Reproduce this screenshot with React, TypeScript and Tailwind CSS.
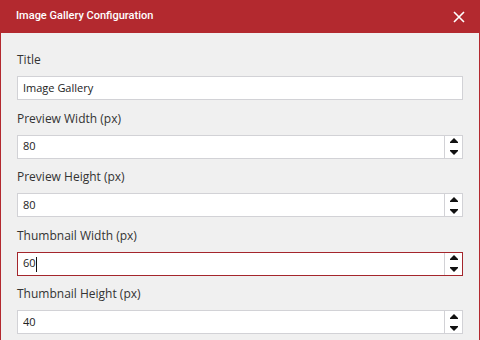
import { useState } from 'react';

type Field = {
  label: string;
  value: string;
  numeric?: boolean;
  focused?: boolean;
};

const fields: Field[] = [
  { label: 'Title', value: 'Image Gallery' },
  { label: 'Preview Width (px)', value: '80', numeric: true },
  { label: 'Preview Height (px)', value: '80', numeric: true },
  { label: 'Thumbnail Width (px)', value: '60', numeric: true, focused: true },
  { label: 'Thumbnail Height (px)', value: '40', numeric: true },
];

function Spinner() {
  return (
    <div className="flex w-[18px] flex-col items-center justify-center gap-[7px] border-l border-[#d2d2d6]">
      <svg width="8" height="5" viewBox="0 0 8 5" className="block">
        <path d="M4 0 L8 4 L8 5 L0 5 L0 4 Z" fill="#111" />
      </svg>
      <svg width="8" height="5" viewBox="0 0 8 5" className="block">
        <path d="M0 0 L8 0 L8 1 L4 5 L0 1 Z" fill="#111" />
      </svg>
    </div>
  );
}

function FieldRow({ field }: { field: Field }) {
  const [value, setValue] = useState(field.value);
  return (
    <div className="flex flex-col">
      <label className="mb-[8px] h-[17px] text-[12px] leading-[17px] text-[#333]">{field.label}</label>
      <div
        className={`flex h-[24px] bg-white border ${
          field.focused ? 'border-[#a4262c]' : 'border-[#d2d2d6]'
        }`}
      >
        <div className="relative flex flex-1 items-center px-[5px]">
          <input
            value={value}
            onChange={(e) => setValue(e.target.value)}
            className="w-full bg-transparent text-[11px] text-[#222] outline-none"
          />
          {field.focused && (
            <span className="pointer-events-none absolute left-[18px] top-[4px] h-[15px] w-px bg-[#111]" />
          )}
        </div>
        {field.numeric && <Spinner />}
      </div>
    </div>
  );
}

export default function App() {
  return (
    <div
      className="flex h-[340px] w-[480px] flex-col overflow-hidden border-x border-[#b3292f] bg-[#f0f0f0]"
      style={{ fontFamily: '"Open Sans", "Noto Sans", sans-serif' }}
    >
      <header className="flex h-[33px] shrink-0 items-center justify-between bg-[#b3292f] pl-[15px] pr-[10px]">
        <h1 className="font-['Roboto',sans-serif] text-[11px] font-medium text-white">
          Image Gallery Configuration
        </h1>
        <button className="flex h-5 w-5 items-center justify-center" aria-label="Close">
          <svg width="12" height="12" viewBox="0 0 12 12">
            <path d="M1 1 L11 11 M11 1 L1 11" stroke="#fff" strokeWidth="1.6" />
          </svg>
        </button>
      </header>
      <div className="flex flex-col gap-[9.5px] px-4 pt-[18px]">
        {fields.map((f) => (
          <FieldRow key={f.label} field={f} />
        ))}
      </div>
    </div>
  );
}
